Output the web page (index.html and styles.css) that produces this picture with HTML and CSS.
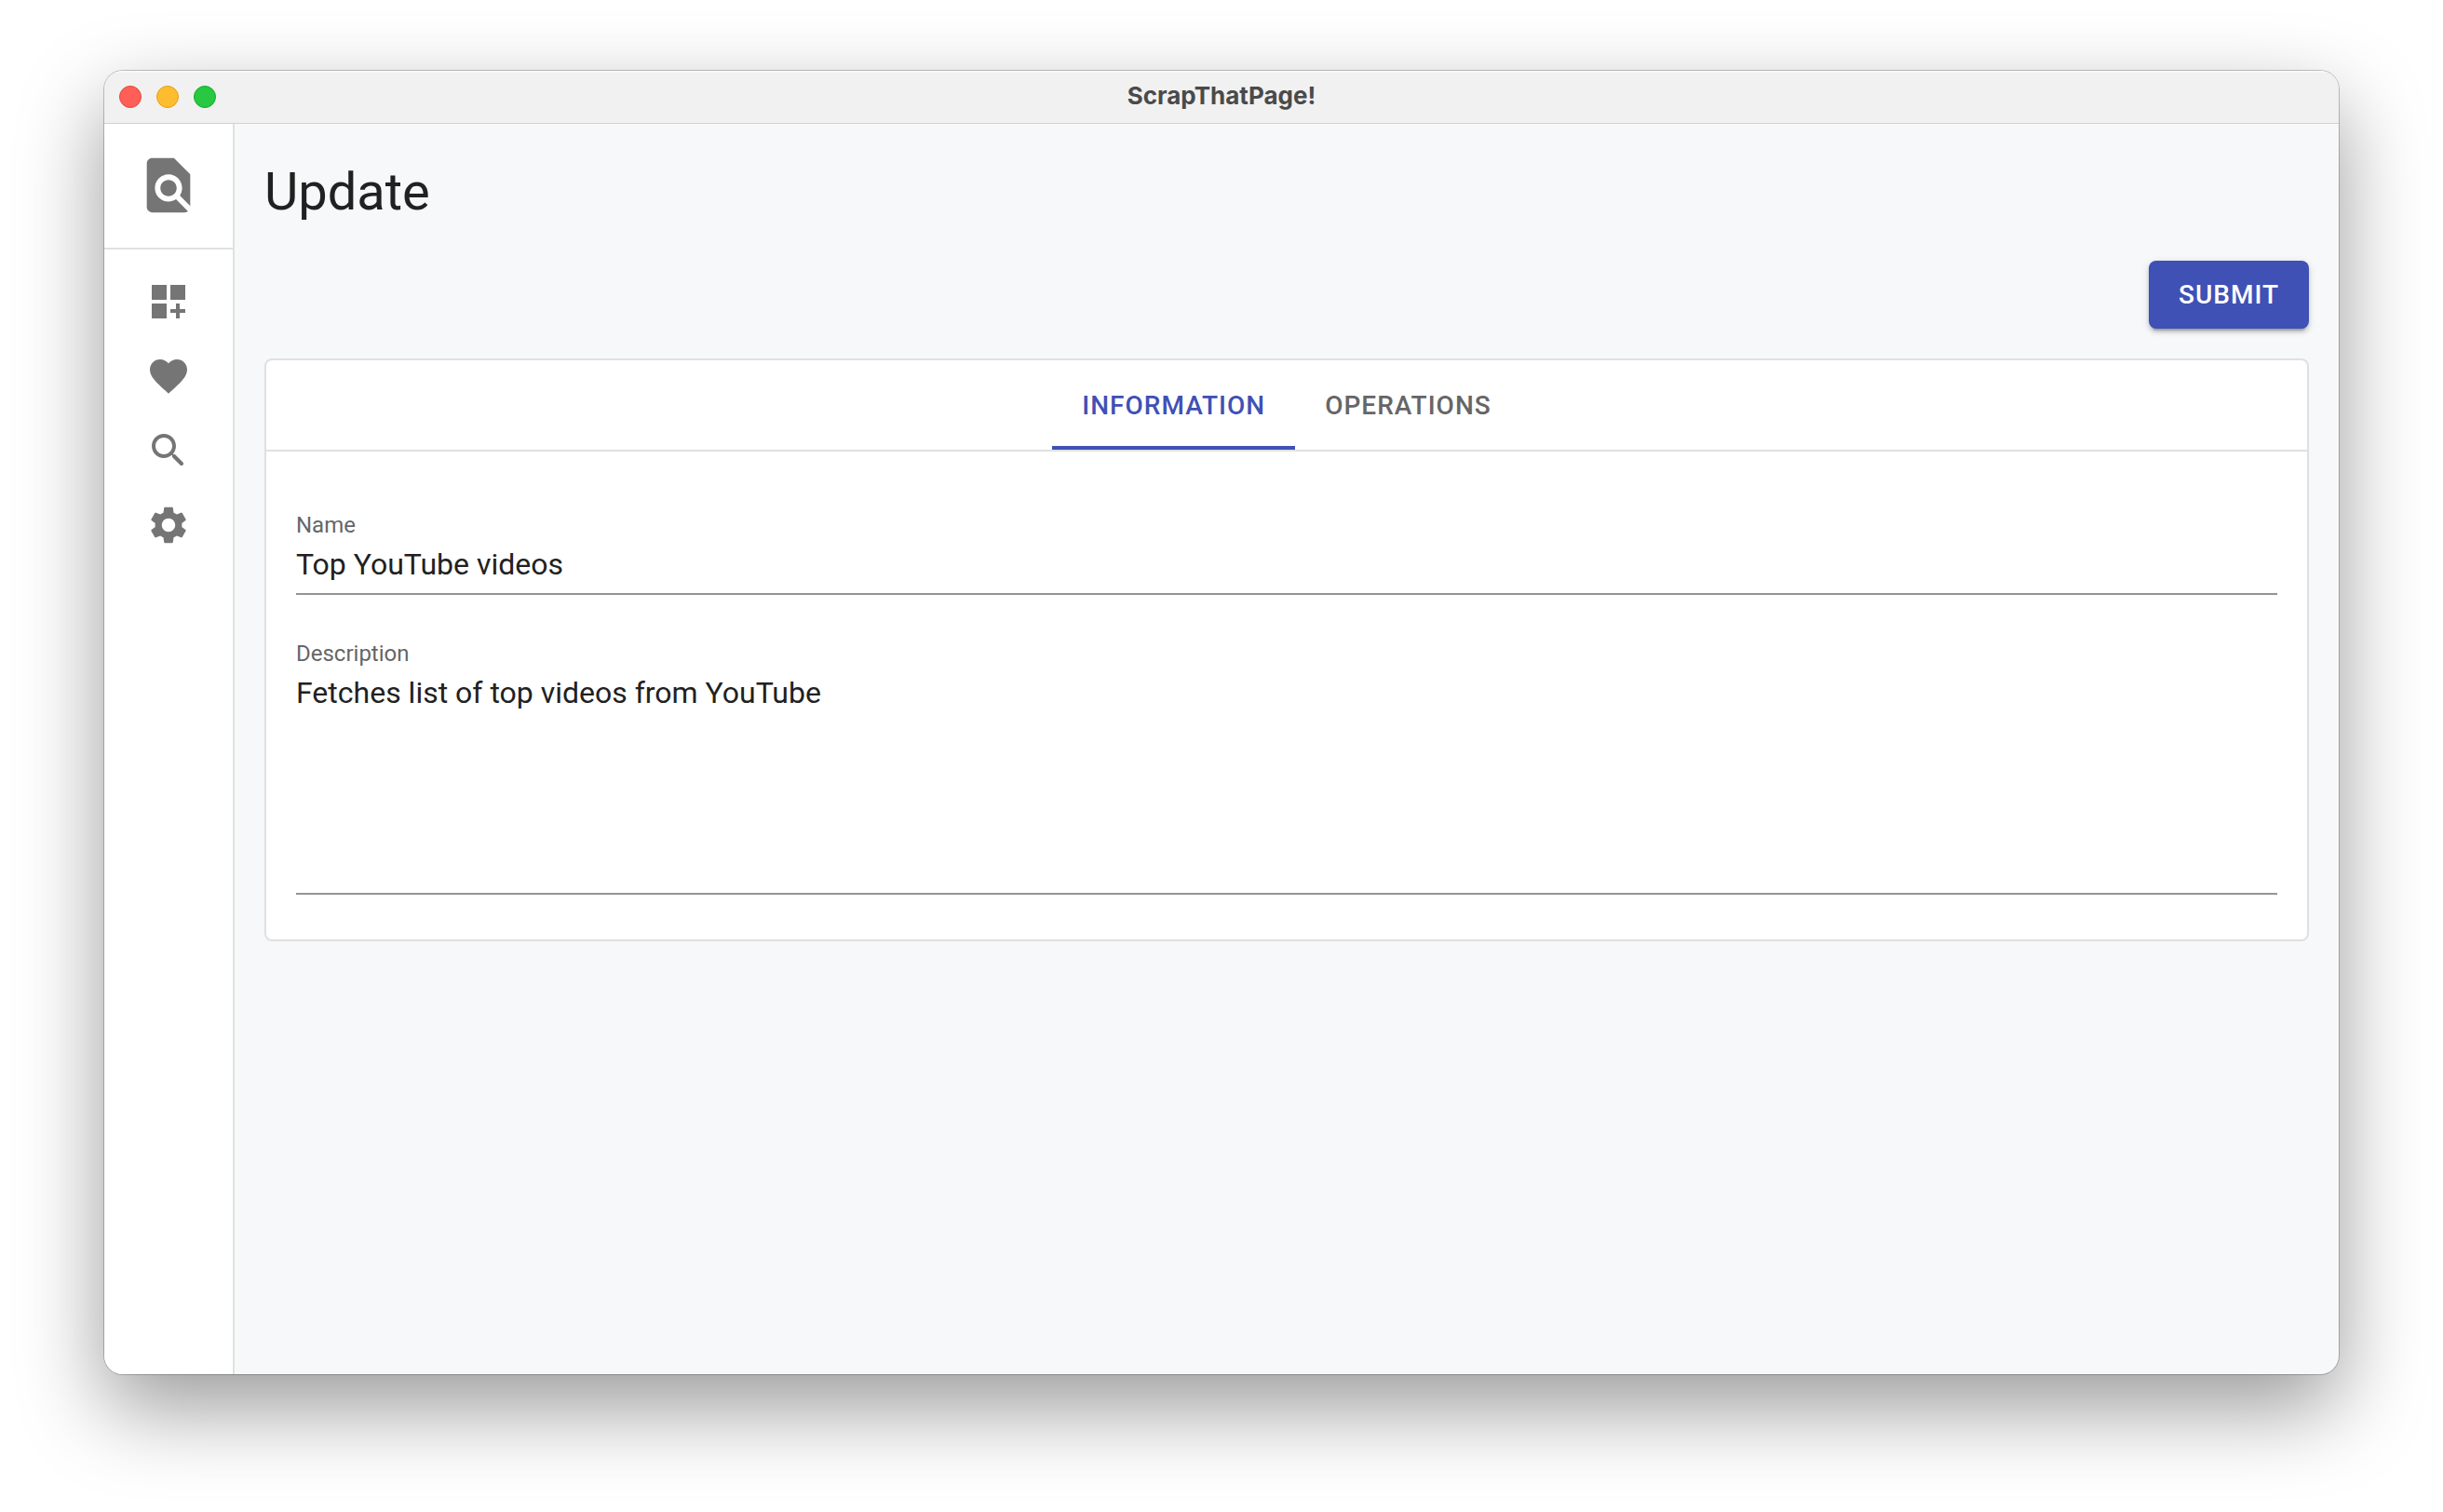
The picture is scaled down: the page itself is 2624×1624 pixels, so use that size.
FILE: index.html
```html
<!DOCTYPE html>
<html lang="en">
<head>
<meta charset="utf-8">
<title>ScrapThatPage!</title>
<link rel="stylesheet" href="styles.css">
</head>
<body>
<div class="window">
  <header class="titlebar">
    <div class="lights">
      <button class="light light-close" type="button" aria-label="Close"></button>
      <button class="light light-minimize" type="button" aria-label="Minimize"></button>
      <button class="light light-zoom" type="button" aria-label="Zoom"></button>
    </div>
    <div class="window-title">ScrapThatPage!</div>
  </header>
  <div class="body">
    <aside class="sidebar">
      <a class="logo" href="#" aria-label="Home">
        <svg class="logo-icon" viewBox="0 0 24 24"><path d="M20 19.59V8l-6-6H6c-1.100 0-1.990.9-1.990 2L4 20c0 1.100.89 2 1.990 2H18c.45 0 .85-.15 1.190-.4l-4.430-4.430c-.8.520-1.740.830-2.760.830-2.760 0-5-2.240-5-5s2.240-5 5-5 5 2.240 5 5c0 1.020-.31 1.960-.83 2.750L20 19.590zM9 13c0 1.660 1.340 3 3 3s3-1.340 3-3-1.340-3-3-3-3 1.340-3 3z"/></svg>
      </a>
      <nav class="nav">
        <a class="nav-link" href="#" aria-label="Dashboard"><svg class="nav-icon" viewBox="0 0 24 24"><path d="M3 3h8v8H3zM13 3h8v8h-8zM3 13h8v8H3zM18 13h-2v3h-3v2h3v3h2v-3h3v-2h-3z"/></svg></a>
        <a class="nav-link" href="#" aria-label="Favorites"><svg class="nav-icon" viewBox="0 0 24 24"><path d="M12 21.350l-1.450-1.320C5.400 15.360 2 12.280 2 8.500 2 5.420 4.420 3 7.500 3c1.740 0 3.410.81 4.500 2.090C13.090 3.810 14.760 3 16.500 3 19.580 3 22 5.420 22 8.500c0 3.780-3.400 6.860-8.550 11.540L12 21.350z"/></svg></a>
        <a class="nav-link" href="#" aria-label="Search"><svg class="nav-icon" viewBox="0 0 24 24"><path d="M15.500 14h-.79l-.28-.27C15.410 12.590 16 11.110 16 9.500 16 5.910 13.090 3 9.500 3S3 5.910 3 9.500 5.910 16 9.500 16c1.610 0 3.090-.59 4.230-1.570l.27.28v.79l4.250 4.250c.41.410 1.080.410 1.490 0 .410-.41.410-1.080 0-1.490L15.500 14zm-6 0C7.010 14 5 11.990 5 9.500S7.010 5 9.500 5 14 7.010 14 9.500 11.990 14 9.500 14z"/></svg></a>
        <a class="nav-link" href="#" aria-label="Settings"><svg class="nav-icon" viewBox="0 0 24 24"><path d="M19.140 12.940c.04-.3.060-.61.060-.94 0-.32-.02-.64-.07-.94l2.030-1.580c.18-.14.23-.41.120-.61l-1.920-3.320c-.12-.22-.37-.29-.59-.22l-2.390.96c-.5-.38-1.030-.7-1.620-.94l-.36-2.540c-.04-.24-.24-.41-.48-.41h-3.840c-.24 0-.43.17-.47.41l-.36 2.540c-.59.24-1.130.57-1.620.94l-2.390-.96c-.22-.08-.47 0-.59.22L2.740 8.870c-.12.210-.08.470.12.610l2.030 1.580c-.05.3-.09.63-.09.940s.02.640.07.940l-2.030 1.580c-.18.140-.23.410-.12.610l1.920 3.320c.12.220.37.290.59.220l2.390-.96c.5.380 1.030.7 1.620.94l.36 2.540c.05.240.24.410.48.410h3.840c.24 0 .44-.17.470-.41l.36-2.540c.59-.24 1.130-.56 1.620-.94l2.390.96c.22.080.47 0 .59-.22l1.920-3.320c.12-.22.070-.47-.12-.61l-2.010-1.580zM12 15.600c-1.980 0-3.600-1.620-3.600-3.600s1.620-3.600 3.600-3.600 3.600 1.620 3.600 3.600-1.620 3.600-3.600 3.600z"/></svg></a>
      </nav>
    </aside>
    <main class="main">
      <h1 class="heading">Update</h1>
      <div class="actions"><button class="submit" type="submit" form="page-form">SUBMIT</button></div>
      <section class="card">
        <div class="tabs" role="tablist">
          <button class="tab tab-active" type="button" role="tab" aria-selected="true">INFORMATION</button>
          <button class="tab" type="button" role="tab" aria-selected="false">OPERATIONS</button>
        </div>
        <form class="form" id="page-form">
          <div class="field">
            <label class="label" for="name">Name</label>
            <input class="input" id="name" type="text" value="Top YouTube videos">
          </div>
          <div class="field">
            <label class="label" for="description">Description</label>
            <textarea class="input textarea" id="description">Fetches list of top videos from YouTube</textarea>
          </div>
        </form>
      </section>
    </main>
  </div>
</div>
</body>
</html>
```
FILE: styles.css
```css
* {
  box-sizing: border-box;
}

body {
  margin: 0;
  padding: 76px 112px 148px;
  background: #fff;
  color: #212121;
  font-family: Roboto, sans-serif;
}

button,
input,
textarea {
  font-family: inherit;
}

.window {
  display: flex;
  flex-direction: column;
  min-height: calc(100vh - 224px);
  overflow: hidden;
  border-radius: 20px;
  background: #f6f8fa;
  box-shadow: 0 0 0 1px rgba(0, 0, 0, 0.22), 0 36px 92px rgba(0, 0, 0, 0.4);
}

.titlebar {
  position: relative;
  display: grid;
  grid-template-columns: 1fr auto 1fr;
  align-items: center;
  height: 56px;
  padding: 0 16px;
  background: #f1f1f1;
  box-shadow: 0 1px 0 #cfd0d1, inset 0 2px 0 #f8f8f8;
}

.lights {
  display: flex;
  gap: 16px;
}

.light {
  width: 24px;
  height: 24px;
  padding: 0;
  border: 1px solid;
  border-radius: 50%;
}

.light-close {
  background: #ff5f57;
  border-color: #e2463f;
}

.light-minimize {
  background: #febc2e;
  border-color: #e1a116;
}

.light-zoom {
  background: #28c840;
  border-color: #12ac28;
}

.window-title {
  padding-bottom: 2px;
  color: #4a4a4a;
  font-family: Inter, sans-serif;
  font-size: 26px;
  font-weight: 700;
  line-height: 32px;
}

.body {
  display: flex;
  flex: 1;
}

.sidebar {
  flex: none;
  width: 140px;
  border-right: 2px solid #e0e0e0;
  background: #fff;
}

.logo {
  display: flex;
  justify-content: center;
  padding: 32px 0;
  border-bottom: 2px solid #e0e0e0;
}

.logo-icon {
  width: 70px;
  height: 70px;
  fill: #757575;
}

.nav {
  padding: 16px 0;
}

.nav-link {
  display: flex;
  justify-content: center;
  padding: 16px 0;
}

.nav-icon {
  width: 48px;
  height: 48px;
  fill: #757575;
}

.main {
  flex: 1;
  padding: 32px;
}

.heading {
  margin: 0 0 32px;
  font-size: 56px;
  font-weight: 400;
  line-height: 84px;
}

.actions {
  display: flex;
  justify-content: flex-end;
  margin-bottom: 32px;
}

.submit {
  padding: 12px 32px;
  border: 0;
  border-radius: 8px;
  background: #3f51b5;
  box-shadow: 0 6px 2px -4px rgba(0, 0, 0, 0.2), 0 4px 4px rgba(0, 0, 0, 0.14), 0 2px 10px rgba(0, 0, 0, 0.12);
  color: #fff;
  font-size: 28px;
  font-weight: 500;
  line-height: 49px;
  letter-spacing: 1px;
}

.card {
  border: 2px solid #e0e0e0;
  border-radius: 8px;
  background: #fff;
}

.tabs {
  display: flex;
  justify-content: center;
  border-bottom: 2px solid #e0e0e0;
}

.tab {
  height: 96px;
  padding: 0 32px;
  border: 0;
  background: none;
  color: #666;
  font-size: 28px;
  font-weight: 500;
  letter-spacing: 1px;
}

.tab-active {
  box-shadow: inset 0 -4px 0 #3f51b5;
  color: #3f51b5;
}

.form {
  display: grid;
  gap: 47px;
  padding: 63px 32px 48px;
}

.field {
  display: flex;
  flex-direction: column;
}

.label {
  color: #666;
  font-size: 24px;
  line-height: 32px;
}

.input {
  width: 100%;
  height: 59px;
  padding: 7px 0 12px;
  border: 0;
  border-bottom: 2px solid #949494;
  border-radius: 0;
  outline: 0;
  background: none;
  color: #212121;
  font-size: 32px;
  line-height: 38px;
}

.textarea {
  display: block;
  height: 243px;
  resize: none;
}
```
